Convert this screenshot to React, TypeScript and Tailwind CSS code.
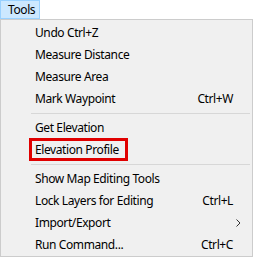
type Entry =
  | { kind: "item"; label: string; shortcut?: string; submenu?: boolean; marked?: boolean }
  | { kind: "sep" };

const entries: Entry[] = [
  { kind: "item", label: "Undo Ctrl+Z" },
  { kind: "item", label: "Measure Distance" },
  { kind: "item", label: "Measure Area" },
  { kind: "item", label: "Mark Waypoint", shortcut: "Ctrl+W" },
  { kind: "sep" },
  { kind: "item", label: "Get Elevation" },
  { kind: "item", label: "Elevation Profile", marked: true },
  { kind: "sep" },
  { kind: "item", label: "Show Map Editing Tools" },
  { kind: "item", label: "Lock Layers for Editing", shortcut: "Ctrl+L" },
  { kind: "item", label: "Import/Export", submenu: true },
  { kind: "item", label: "Run Command...", shortcut: "Ctrl+C" },
];

export default function App() {
  return (
    <div
      className="w-[254px] h-[259px] bg-white text-[12px] tracking-[-0.4px] text-black"
      style={{ fontFamily: '"Noto Sans", "Open Sans", sans-serif' }}
    >
      <div className="h-[19px] flex">
        <div className="w-[40px] h-[19px] bg-[#cce8ff] border border-[#99d1ff] flex items-center pl-[7px] leading-none">
          Tools
        </div>
      </div>
      <div className="w-[253px] h-[238px] bg-[#f0f0f0] border border-[#cccccc] pt-[2px]">
        {entries.map((e, i) =>
          e.kind === "sep" ? (
            <div key={i} className="h-[7px] flex items-center pl-[30px] pr-[2px]">
              <div className="h-px w-full bg-[#d7d7d7]" />
            </div>
          ) : (
            <div key={i} className="relative h-[22px] flex items-center pl-[34px] pr-[19px]">
              <span className="flex-1 whitespace-nowrap">{e.label}</span>
              {e.shortcut && <span className="whitespace-nowrap">{e.shortcut}</span>}
              {e.submenu && (
                <svg className="absolute right-[11px] top-[7px]" width="5" height="8" viewBox="0 0 5 8">
                  <polyline points="0.5,0.5 4,4 0.5,7.5" fill="none" stroke="#333" strokeWidth="1" />
                </svg>
              )}
              {e.marked && (
                <div className="absolute left-[28px] top-[-1px] w-[99px] h-[23px] border-[3px] border-[#e00000]" />
              )}
            </div>
          )
        )}
      </div>
    </div>
  );
}
